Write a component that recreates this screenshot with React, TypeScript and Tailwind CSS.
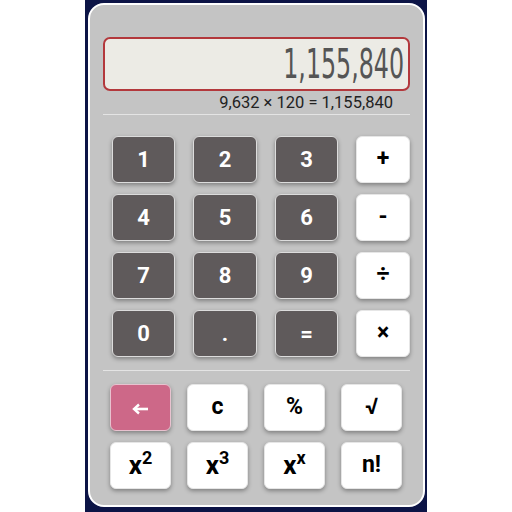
import React from "react";

type Key = {
  label: React.ReactNode;
  kind: "num" | "op" | "back";
};

const topKeys: Key[] = [
  { label: "1", kind: "num" },
  { label: "2", kind: "num" },
  { label: "3", kind: "num" },
  { label: "+", kind: "op" },
  { label: "4", kind: "num" },
  { label: "5", kind: "num" },
  { label: "6", kind: "num" },
  { label: "-", kind: "op" },
  { label: "7", kind: "num" },
  { label: "8", kind: "num" },
  { label: "9", kind: "num" },
  { label: "÷", kind: "op" },
  { label: "0", kind: "num" },
  { label: ".", kind: "num" },
  { label: "=", kind: "num" },
  { label: "×", kind: "op" },
];

const sup = (base: string, exp: string) => (
  <span className="text-[26px]">
    {base}
    <sup className="text-[18px] -top-[10px]">{exp}</sup>
  </span>
);

const BackArrow = () => (
  <svg width="17" height="12" viewBox="0 0 17 12" fill="none">
    <path d="M16 6H3" stroke="white" strokeWidth="2.6" />
    <path d="M7 1.5L2 6l5 4.5" stroke="white" strokeWidth="2.4" />
  </svg>
);

const bottomKeys: Key[] = [
  { label: <BackArrow />, kind: "back" },
  { label: "c", kind: "op" },
  { label: "%", kind: "op" },
  { label: "√", kind: "op" },
  { label: sup("x", "2"), kind: "op" },
  { label: sup("x", "3"), kind: "op" },
  { label: sup("x", "x"), kind: "op" },
  { label: "n!", kind: "op" },
];

function CalcKey({ label, kind }: Key) {
  const styles = {
    num: "bg-[#5f5a5b] text-white border border-[#dcdcdc] text-[22px]",
    op: "bg-white text-black border border-[#e6e6e6] text-[23px]",
    back: "bg-[#cd6888] text-white border border-[#e8c2cf] pt-[3px]",
  }[kind];
  return (
    <button
      type="button"
      className={`flex items-center justify-center rounded-[6px] font-bold shadow-[0_2px_4px_rgba(0,0,0,0.35)] ${styles}`}
    >
      {label}
    </button>
  );
}

export default function App() {
  return (
    <div
      className="w-[512px] h-[512px] bg-white flex justify-center"
      style={{ fontFamily: "Roboto, 'Liberation Sans', sans-serif" }}
    >
      <div className="w-[342px] h-full bg-[#0c1446] pt-[3px] px-[3px] pb-[5px] flex">
        <div className="flex-1 flex flex-col rounded-[16px] border-2 border-white bg-[#c4c4c4] pt-[32px] px-[13px]">
          <div className="h-[54px] rounded-[7px] border-2 border-[#b3383c] bg-[#ecebe5] flex items-center justify-end pr-[4px] overflow-hidden">
            <span
              className="inline-block text-[40px] leading-none text-[#555555] origin-right scale-x-[0.66]"
              style={{ fontFamily: "'DejaVu Sans Condensed', sans-serif" }}
            >
              1,155,840
            </span>
          </div>
          <div className="mt-[2px] pr-[17px] text-right text-[16.5px] leading-[20px] text-[#222222]">
            9,632 × 120 = 1,155,840
          </div>
          <div className="mt-[1px] h-px bg-[#e4e4e4]" />

          <div className="mt-[21px] ml-[9px] grid grid-cols-[63px_64px_63px_54px] gap-x-[18px] gap-y-[11px] auto-rows-[47px]">
            {topKeys.map((k, i) => (
              <CalcKey key={i} {...k} />
            ))}
          </div>

          <div className="mt-[13px] h-px bg-[#e4e4e4]" />

          <div className="mt-[13px] ml-[7px] grid grid-cols-[61px_61px_61px_61px] gap-x-[16px] gap-y-[11px] auto-rows-[47px]">
            {bottomKeys.map((k, i) => (
              <CalcKey key={i} {...k} />
            ))}
          </div>
        </div>
      </div>
    </div>
  );
}
